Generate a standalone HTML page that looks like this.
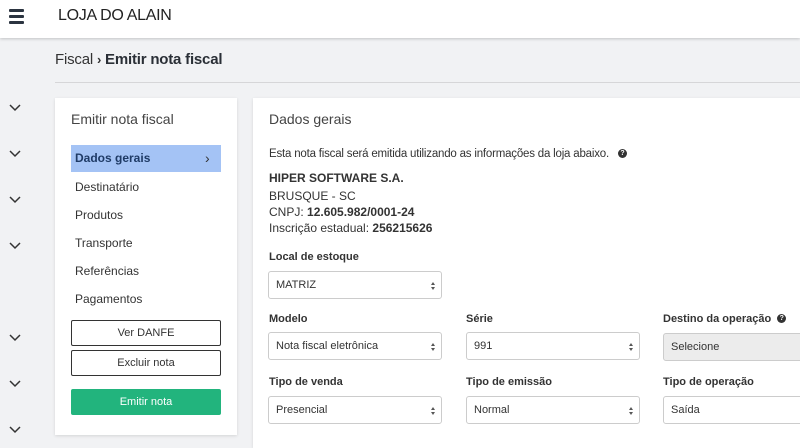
<!DOCTYPE html>
<html><head><style>
*{margin:0;padding:0;box-sizing:border-box}
body{width:800px;height:440px;overflow:hidden;background:#f1f2f4;font-family:"Liberation Sans",sans-serif;color:#333;position:relative}
.a{position:absolute}
.hdr{left:0;top:0;width:800px;height:38px;background:#fff;box-shadow:0 1px 3px rgba(0,0,0,.2)}
.card{background:#fff;box-shadow:0 1px 3px rgba(0,0,0,.12)}
.nav{left:71px;font-size:12px;color:#333}
.btn{left:71px;width:150px;height:26px;border:1px solid #333;border-radius:2px;font-size:11px;text-align:center;line-height:24px;background:#fff}
.lbl{font-size:11px;font-weight:bold;color:#333}
.sel{height:28px;border:1px solid #ccc;border-radius:3px;background:#fff;font-size:11px;padding-left:7px;line-height:26px;color:#333}
.sel:after{content:"";position:absolute;right:6px;top:10px;border-left:2px solid transparent;border-right:2px solid transparent;border-bottom:3px solid #555}
.sel:before{content:"";position:absolute;right:6px;top:15px;border-left:2px solid transparent;border-right:2px solid transparent;border-top:3px solid #555}
.q{display:inline-block;width:9px;height:9px;border-radius:50%;background:#333;color:#fff;font-size:7px;text-align:center;line-height:9px;font-weight:bold;vertical-align:2px;margin-left:6px}
</style></head><body>
<div class="a hdr"></div>
<div class="a" style="left:9px;top:9px;width:15px;height:3px;background:#2b3440;border-radius:1px"></div>
<div class="a" style="left:9px;top:15px;width:15px;height:3px;background:#2b3440;border-radius:1px"></div>
<div class="a" style="left:9px;top:21px;width:15px;height:3px;background:#2b3440;border-radius:1px"></div>
<div class="a" style="left:58px;top:7px;font-size:16px;color:#222;letter-spacing:-0.3px">LOJA DO ALAIN</div>
<div class="a" style="left:55px;top:51px;font-size:15px;color:#333;letter-spacing:-0.2px">Fiscal <b style="font-size:13px">›</b> <span style="font-weight:bold;color:#2a2f36">Emitir nota fiscal</span></div>
<div class="a" style="left:55px;top:82px;width:745px;height:1px;background:#d6d6d8"></div>
<svg class="a" style="left:0;top:0" width="40" height="440"><g fill="none" stroke="#333" stroke-width="1.5">
<path d="M10 105l5 5 5-5"/><path d="M10 151l5 5 5-5"/><path d="M10 197l5 5 5-5"/><path d="M10 243l5 5 5-5"/><path d="M10 335l5 5 5-5"/><path d="M10 381l5 5 5-5"/><path d="M10 427l5 5 5-5"/></g></svg>
<div class="a card" style="left:55px;top:98px;width:182px;height:337px"></div>
<div class="a" style="left:71px;top:111px;font-size:14px;color:#444">Emitir nota fiscal</div>
<div class="a" style="left:71px;top:145px;width:150px;height:27px;background:#a4c3f5"></div>
<div class="a nav" style="top:151px;font-weight:bold;color:#1f3b66;left:75px">Dados gerais</div>
<div class="a" style="left:205px;top:150px;font-size:14px;color:#333">›</div>
<div class="a nav" style="top:180px;left:75px">Destinatário</div>
<div class="a nav" style="top:208px;left:75px">Produtos</div>
<div class="a nav" style="top:236px;left:75px">Transporte</div>
<div class="a nav" style="top:264px;left:75px">Referências</div>
<div class="a nav" style="top:292px;left:75px">Pagamentos</div>
<div class="a btn" style="top:320px">Ver DANFE</div>
<div class="a btn" style="top:350px">Excluir nota</div>
<div class="a btn" style="top:389px;background:#22b47d;border-color:#22b47d;color:#fff">Emitir nota</div>
<div class="a card" style="left:253px;top:98px;width:560px;height:350px"></div>
<div class="a" style="left:269px;top:111px;font-size:14px;color:#444">Dados gerais</div>
<div class="a" style="left:269px;top:148px;font-size:11.5px;letter-spacing:-0.2px">Esta nota fiscal será emitida utilizando as informações da loja abaixo.<span class="q" style="margin-left:9px">?</span></div>
<div class="a" style="left:269px;top:171px;font-size:12px;font-weight:bold">HIPER SOFTWARE S.A.</div>
<div class="a" style="left:269px;top:189px;font-size:12px">BRUSQUE - SC</div>
<div class="a" style="left:269px;top:205px;font-size:12px">CNPJ: <b>12.605.982/0001-24</b></div>
<div class="a" style="left:269px;top:221px;font-size:12px">Inscrição estadual: <b>256215626</b></div>
<div class="a lbl" style="left:269px;top:251px">Local de estoque</div>
<div class="a sel" style="left:268px;top:271px;width:174px">MATRIZ</div>
<div class="a lbl" style="left:269px;top:313px">Modelo</div>
<div class="a lbl" style="left:466px;top:313px">Série</div>
<div class="a lbl" style="left:663px;top:313px">Destino da operação<span class="q">?</span></div>
<div class="a sel" style="left:268px;top:332px;width:174px">Nota fiscal eletrônica</div>
<div class="a sel" style="left:466px;top:332px;width:174px">991</div>
<div class="a sel" style="left:663px;top:333px;width:150px;background:#ececec">Selecione</div>
<div class="a lbl" style="left:269px;top:376px">Tipo de venda</div>
<div class="a lbl" style="left:466px;top:376px">Tipo de emissão</div>
<div class="a lbl" style="left:663px;top:376px">Tipo de operação</div>
<div class="a sel" style="left:268px;top:396px;width:174px">Presencial</div>
<div class="a sel" style="left:466px;top:396px;width:174px">Normal</div>
<div class="a sel" style="left:663px;top:396px;width:150px">Saída</div>
</body></html>
